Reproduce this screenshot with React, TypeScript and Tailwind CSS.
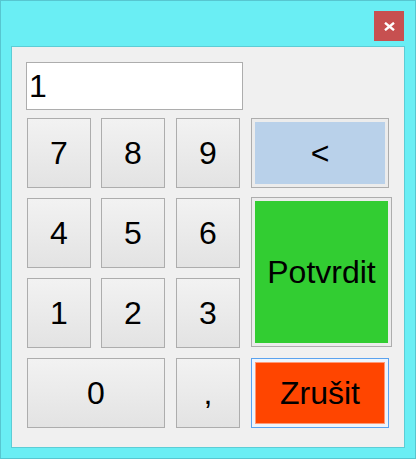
import React from "react";

const font = { fontFamily: '"Liberation Sans", Arial, sans-serif' };

function Key({ label, className = "" }: { label: string; className?: string }) {
  return (
    <div
      className={`h-[70px] border border-[#adadad] bg-gradient-to-b from-[#f2f2f2] to-[#e3e3e3] flex items-center justify-center text-[32px] leading-none text-black ${className}`}
    >
      {label}
    </div>
  );
}

export default function App() {
  return (
    <div
      className="w-[416px] h-[459px] bg-[#6aeef4] border border-[#57c6d0] flex flex-col"
      style={font}
    >
      <div className="h-[45px] flex justify-end items-start pt-[10px] pr-[11px]">
        <div className="w-[30px] h-[30px] bg-[#c75050] flex items-center justify-center">
          <svg width="11" height="9" viewBox="0 0 11 9">
            <path d="M1 0.8 L10 8.2 M10 0.8 L1 8.2" stroke="#fff" strokeWidth="2.4" />
          </svg>
        </div>
      </div>
      <div className="ml-[10px] w-[394px] h-[402px] border border-[#5ccdd6] bg-[#f0f0f0] flex flex-col">
        <div className="ml-[14px] mt-[15px] w-[217px] h-[48px] bg-white border border-[#adadad] flex items-center pl-[2px] text-[32px] leading-none text-black">
          1
        </div>
        <div className="ml-[15px] mt-[8px] grid grid-cols-[74px_75px_75px_141px] grid-rows-[70px_70px_70px_70px] gap-y-[10px]">
          <Key label="7" className="w-[64px]" />
          <Key label="8" className="w-[64px]" />
          <Key label="9" className="w-[64px]" />
          <div className="w-[138px] h-[70px] border border-[#adadad] bg-[#ececec] p-[3px]">
            <div className="w-full h-full bg-[#b9d1ea] flex items-center justify-center text-[32px] leading-none text-black">
              &lt;
            </div>
          </div>
          <Key label="4" className="w-[64px]" />
          <Key label="5" className="w-[64px]" />
          <Key label="6" className="w-[64px]" />
          <div className="row-span-2 -mt-px w-[141px] h-[150px] border border-[#adadad] bg-[#ececec] p-[3px]">
            <div className="w-full h-full bg-[#32cd32] flex items-center justify-center text-[32px] leading-none text-black">
              Potvrdit
            </div>
          </div>
          <Key label="1" className="w-[64px]" />
          <Key label="2" className="w-[64px]" />
          <Key label="3" className="w-[64px]" />
          <Key label="0" className="col-span-2 w-[138px]" />
          <Key label="," className="w-[64px]" />
          <div className="w-[138px] h-[70px] border border-[#5aa2ee] bg-[#eef5fc] p-[3px]">
            <div className="w-full h-full bg-[#ff4500] border border-[#ff9a78] flex items-center justify-center text-[32px] leading-none text-black">
              Zrušit
            </div>
          </div>
        </div>
      </div>
    </div>
  );
}
